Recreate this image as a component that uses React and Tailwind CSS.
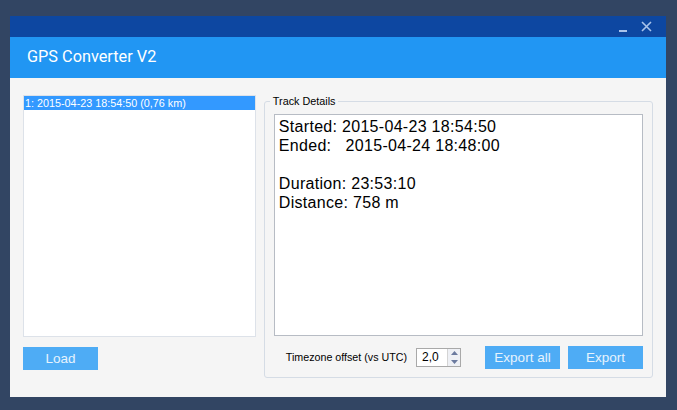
import { useState } from 'react'

const TRACKS = ['1: 2015-04-23 18:54:50 (0,76 km)']

function Spinner({ value }) {
  return (
    <div className="flex h-[19px] w-[45px] items-stretch border border-[#a9a9a9] bg-white">
      <div className="flex-1 pl-[5px] text-[12px] leading-[17px] text-black">{value}</div>
      <div className="flex w-[13px] flex-col border-l border-[#d4d4d4]">
        <div className="flex flex-1 items-center justify-center bg-[#eef0f5]">
          <svg width="7" height="4" viewBox="0 0 7 4"><path d="M0 4 L3.5 0 L7 4 Z" fill="#6b7a9f" /></svg>
        </div>
        <div className="flex flex-1 items-center justify-center bg-[#eef0f5]">
          <svg width="7" height="4" viewBox="0 0 7 4"><path d="M0 0 L3.5 4 L7 0 Z" fill="#6b7a9f" /></svg>
        </div>
      </div>
    </div>
  )
}

function Btn({ children }) {
  return (
    <button className="h-[23px] w-[75px] bg-[#4eacf5] text-[13.5px] leading-[23px] text-[#e6f3fd]">
      {children}
    </button>
  )
}

export default function App() {
  const [sel] = useState(0)

  return (
    <div
      className="h-[410px] w-[677px] bg-[#324563] pl-[10px] pt-[16px]"
      style={{ fontFamily: '"Liberation Sans", Arial, sans-serif' }}
    >
      <div className="flex h-[381px] w-[656px] flex-col bg-[#f5f5f5]">
        {/* title bar */}
        <div className="flex h-[21px] items-center justify-end gap-[13px] bg-[#0d47a1] pr-[14px] text-[#a9c3ea]">
          <svg width="10" height="10" viewBox="0 0 10 10"><path d="M1 9 H9" stroke="currentColor" strokeWidth="2" /></svg>
          <svg width="11" height="11" viewBox="0 0 11 11"><path d="M1 1 L10 10 M10 1 L1 10" stroke="currentColor" strokeWidth="1.6" /></svg>
        </div>
        {/* header */}
        <div
          className="flex h-[41px] items-center bg-[#2196f3] pb-[1px] pl-[17px] text-[16.3px] text-white"
          style={{ fontFamily: 'Roboto, sans-serif' }}
        >
          GPS Converter V2
        </div>

        {/* body */}
        <div className="flex gap-[8px] pl-[13px] pr-[13px] pt-[17px]">
          <div className="flex w-[234px] flex-col">
            <div className="h-[242px] border border-[#dde2e9] bg-white">
              {TRACKS.map((t, i) => (
                <div
                  key={t}
                  className={
                    i === sel
                      ? 'h-[14px] bg-[#3399ff] pl-[1px] text-[10.8px] leading-[14px] text-white'
                      : 'h-[14px] pl-[1px] text-[10.8px] leading-[14px] text-black'
                  }
                >
                  {t}
                </div>
              ))}
            </div>
            <div className="mt-[9px]">
              <Btn>Load</Btn>
            </div>
          </div>

          <fieldset className="mt-[-1px] h-[284px] w-[388px] rounded-[3px] border border-[#d5dce5] px-[9px]">
            <legend className="ml-[-4px] px-[3px] text-[10.8px] leading-[14px] text-black">Track Details</legend>
            <div className="mt-[6px] h-[222px] whitespace-pre border border-[#b7bcc4] bg-white pl-[4px] pt-[2px] text-[16px] leading-[19px] tracking-[0.3px] text-black">
              {'Started: 2015-04-23 18:54:50\nEnded:   2015-04-24 18:48:00\n\nDuration: 23:53:10\nDistance: 758 m'}
            </div>
            <div className="mt-[10px] flex items-center">
              <span className="ml-[12px] whitespace-nowrap text-[10.7px] text-black">Timezone offset (vs UTC)</span>
              <div className="ml-[9px]">
                <Spinner value="2,0" />
              </div>
              <div className="ml-[24px] flex gap-[8px]">
                <Btn>Export all</Btn>
                <Btn>Export</Btn>
              </div>
            </div>
          </fieldset>
        </div>
      </div>
    </div>
  )
}
